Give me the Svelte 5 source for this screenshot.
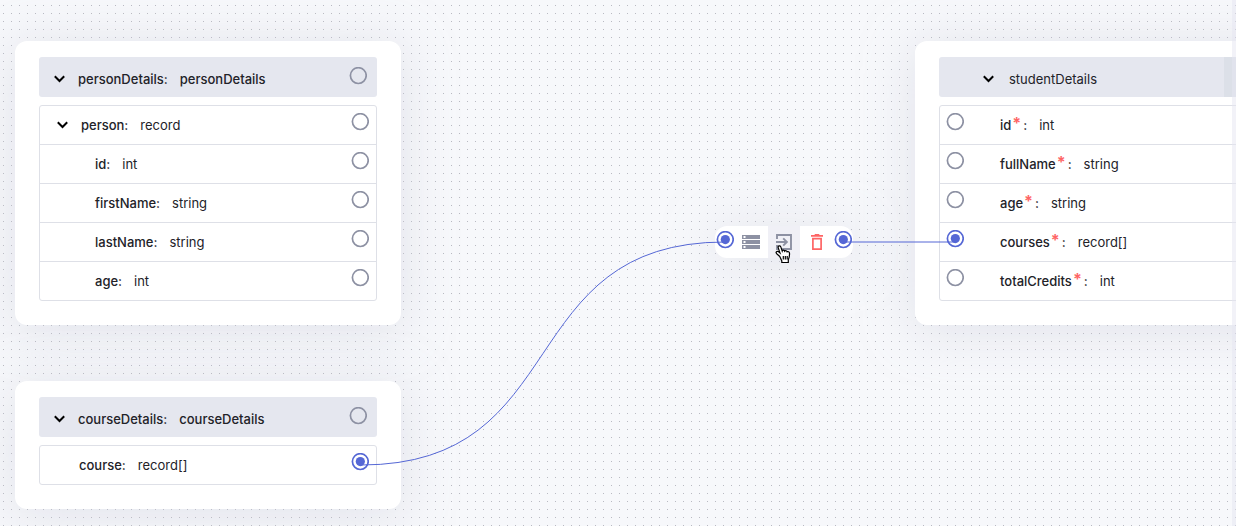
<script>
  const sources = [
    {
      id: 'person', x: 15, y: 41, name: 'personDetails', type: 'personDetails',
      rows: [
        { name: 'person', type: 'record', open: true },
        { name: 'id', type: 'int', nested: true },
        { name: 'firstName', type: 'string', nested: true },
        { name: 'lastName', type: 'string', nested: true },
        { name: 'age', type: 'int', nested: true }
      ]
    },
    {
      id: 'course', x: 15, y: 381, name: 'courseDetails', type: 'courseDetails',
      rows: [{ name: 'course', type: 'record[]', linked: true }]
    }
  ];
  const target = [
    { name: 'id', type: 'int' },
    { name: 'fullName', type: 'string' },
    { name: 'age', type: 'string' },
    { name: 'courses', type: 'record[]', linked: true },
    { name: 'totalCredits', type: 'int' }
  ];
</script>

{#snippet port(linked)}
  <svg class="port" class:linked viewBox="0 0 18 18" aria-hidden="true">
    <circle class="ring" cx="9.300" cy="8.600" r="7.900" />
    {#if linked}<circle class="dot" cx="9.300" cy="8.600" r="4.600" />{/if}
  </svg>
{/snippet}

{#snippet chevron()}
  <button class="toggle" aria-label="Collapse">
    <svg viewBox="0 0 12 8" aria-hidden="true"><path d="M.8 1.300 5.500 6l4.700-4.700" /></svg>
  </button>
{/snippet}

<main class="canvas">
  {#each sources as node (node.id)}
    <section class="node" style="left: {node.x}px; top: {node.y}px">
      <header>
        {@render chevron()}
        <span class="name">{node.name}:</span>
        <span class="name">{node.type}</span>
        {@render port(false)}
      </header>
      <ul>
        {#each node.rows as row}
          <li class:nested={row.nested} class:open={row.open}>
            {#if row.open}{@render chevron()}{/if}
            <span class="name">{row.name}:</span>
            <span>{row.type}</span>
            {@render port(row.linked)}
          </li>
        {/each}
      </ul>
    </section>
  {/each}

  <section class="node target">
    <header>
      {@render chevron()}
      <span>studentDetails</span>
      <span class="tools"></span>
    </header>
    <ul>
      {#each target as row}
        <li>
          {@render port(row.linked)}
          <span class="name">{row.name}<sup>*</sup>:</span>
          <span>{row.type}</span>
        </li>
      {/each}
    </ul>
  </section>

  <div class="link-node">
    {@render port(true)}
    <button aria-label="Edit expression">
      <svg width="18" height="14" viewBox="0 0 18 14" fill="#8d91a3">
        <path fill-rule="evenodd" d="M0 0h18v4H0zM1.500 1v2h2V1zM0 5h18v4H0zM1.500 6v2h2V6zM0 10h18v4H0zM1.500 11v2h2v-2z" />
      </svg>
    </button>
    <button class="hovered" aria-label="Go to query">
      <svg width="16" height="16" viewBox="0 0 16 16" fill="none" stroke="#8d91a3" stroke-width="1.900">
        <path d="M1 5V1h14v14H1V11M0 8h10.500M7.200 4.300 10.900 8l-3.700 3.700" />
      </svg>
    </button>
    <button aria-label="Delete link">
      <svg width="12" height="16" viewBox="0 0 12 16" fill="none" stroke="#fe6565" stroke-width="1.700">
        <path d="M0 1.800h12M3.700.8h4.600M1.900 4.600h8.200v10.500H1.900z" />
      </svg>
    </button>
    {@render port(true)}
  </div>

  <svg class="links" aria-hidden="true">
    <path d="M361 465C575 465 511 242 725 242" />
    <path d="M843 242H956" />
  </svg>

  <svg class="pointer" viewBox="0 0 17 19" aria-hidden="true">
    <path d="M4.800 11.500 1.700 8.700C.3 7.300 1.700 5.700 3.300 6.600L5 8 3.200 2.600C2.700.8 5.100.1 5.800 1.900L7.200 6c.4-1.200 2.100-1 2.500.2.600-.9 2.100-.5 2.400.6.900-.6 2.300 0 2.400 1.300.1 2.200 0 4.400-1.200 6.700V17.500H6.800v-1.700C6 14.500 5.500 13 4.800 11.500z" />
    <path class="fingers" d="M8.300 11v3.500M10.300 11v3.500M12.200 11v3.500" />
  </svg>
  <div class="edge"></div>
</main>

<style>
  :global(body) { margin: 0; }
  .canvas {
    position: relative;
    height: 100vh;
    min-height: 520px;
    overflow: hidden;
    background:
      conic-gradient(from 90deg at 7px 7px, #b9bac2 90deg, transparent 0) 4px 6px / 8px 8px
      #f7f8fb;
    color: #222228;
    font: 13px/20px Inter, sans-serif;
  }
  .node {
    position: absolute;
    box-sizing: border-box;
    width: 386px;
    padding: 16px 24px 24px;
    border-radius: 12px;
    background: #fff;
    box-shadow: 0 5px 50px rgba(203, 206, 219, 0.5);
  }
  header, li { display: flex; align-items: center; }
  header {
    gap: 12px;
    height: 40px;
    padding: 4px 10px 0 15px;
    box-sizing: border-box;
    border-radius: 3px;
    background: #e5e7ef;
  }
  ul {
    margin: 8px 0 0;
    padding: 0;
    border: 1px solid #dee0e7;
    border-radius: 3px;
    list-style: none;
  }
  li { gap: 12px; height: 38px; padding: 0 7px 0 39px; }
  li + li { border-top: 1px solid #dee0e7; }
  li.open { padding-left: 17px; }
  li.nested { padding-left: 55px; }
  .name { font-weight: 500; }
  .toggle {
    display: flex;
    padding: 0;
    border: 0;
    background: none;
  }
  .toggle svg { width: 12px; height: 8px; fill: none; stroke: #000; stroke-width: 2; }
  .port { width: 18px; height: 18px; margin-left: auto; flex: none; }
  li .port, header .port { margin-bottom: 6px; }
  .ring { fill: #fff; stroke: #8d91a3; stroke-width: 1.700px; }
  header .ring { fill: none; }
  .linked .ring { stroke: #5567d5; }
  .dot { fill: #5567d5; }
  .target { left: 915px; top: 41px; }
  .target header { padding: 4px 0 0 44px; gap: 14px; }
  .tools { align-self: stretch; width: 53px; margin: -4px 0 0 auto; background: #dce0e8; }
  .target li { padding: 0 6px; }
  .target .port { margin-left: 0; margin-right: 24px; }
  sup { margin: 0 2px 0 1px; color: #fe6565; font: 700 16px/1 Inter, sans-serif; vertical-align: 1px; }
  .link-node {
    position: absolute;
    left: 715px;
    top: 226px;
    display: flex;
    width: 138px;
    height: 32px;
    border-radius: 12px;
    background: #fff;
    box-shadow: 0 5px 50px rgba(203, 206, 219, 0.5);
  }
  .link-node .port { margin: 5px 1px 0; }
  .link-node button {
    display: flex;
    flex: 1;
    align-items: center;
    justify-content: center;
    padding: 0;
    border: 0;
    background: none;
  }
  .link-node .hovered { background: #f0f0f6; }
  .links { position: absolute; inset: 0; width: 100%; height: 100%; fill: none; stroke: #5567d5; }
  .pointer { position: absolute; left: 775px; top: 245px; width: 17px; height: 19px; fill: #fff; stroke: #000; stroke-width: 1.200; }
  .edge { position: absolute; inset: 0 0 0 auto; width: 4px; background: rgba(230, 230, 242, 0.5); }
</style>
